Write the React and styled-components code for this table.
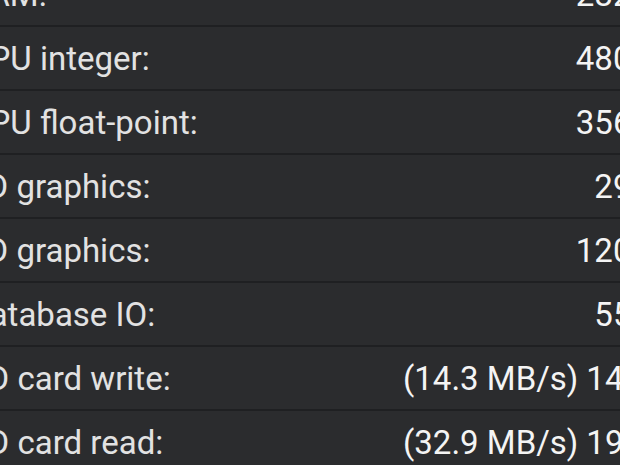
import styled, { createGlobalStyle } from "styled-components";

const scores = [
  { label: "RAM:", value: "2824" },
  { label: "CPU integer:", value: "4806" },
  { label: "CPU float-point:", value: "3562" },
  { label: "2D graphics:", value: "299" },
  { label: "3D graphics:", value: "1203" },
  { label: "Database IO:", value: "555" },
  { label: "SD card write:", speed: "(14.3 MB/s)", value: "143" },
  { label: "SD card read:", speed: "(32.9 MB/s)", value: "197" },
];

export default function App() {
  return (
    <>
      <GlobalStyle />
      <LIST>
        {scores.map((row) => (
          <ROW key={row.label}>
            <LABEL>{row.label}</LABEL>
            <VALUE $withSpeed={!!row.speed}>
              {row.speed && <SPEED>{row.speed}</SPEED>}
              {row.value}
            </VALUE>
          </ROW>
        ))}
      </LIST>
    </>
  );
}

const GlobalStyle = createGlobalStyle`
  html, body {
    margin: 0;
    height: 100%;
    overflow: hidden;
    background: #2b2c2e;
  }
`;

const LIST = styled.ul`
  list-style: none;
  margin: -37px 0 0 -32px;
  padding: 0;
  width: 682px;
  font-family: Roboto, "Noto Sans", sans-serif;
  font-size: 33px;
`;

const ROW = styled.li`
  display: flex;
  align-items: center;
  justify-content: space-between;
  height: 62px;
  border-bottom: 2px solid #1f2022;
  background: #2b2c2e;
`;

const LABEL = styled.span`
  color: #e2e2e2;
  white-space: nowrap;
`;

const VALUE = styled.span`
  display: flex;
  align-items: baseline;
  margin-right: ${(p) => (p.$withSpeed ? "8px" : "0")};
  color: #f4f4f4;
  white-space: nowrap;
`;

const SPEED = styled.span`
  margin-right: 8px;
`;
